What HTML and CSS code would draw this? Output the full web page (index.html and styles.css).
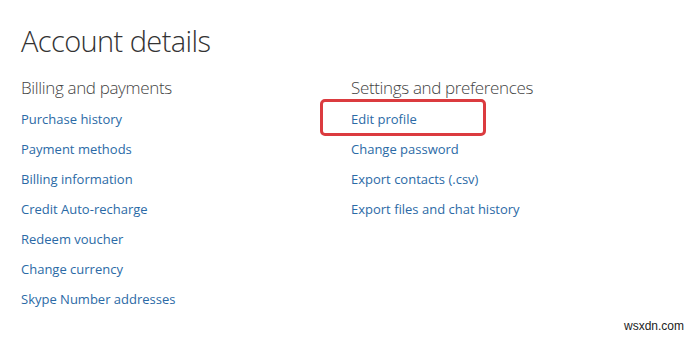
FILE: index.html
```html
<!DOCTYPE html>
<html lang="en">
<head>
  <meta charset="UTF-8" />
  <title>Account details</title>
  <link rel="stylesheet" href="styles.css">
</head>
<body>
  <div class="page">
    <h1 class="title">Account details</h1>

    <div class="columns">
      <div class="section">
        <h2>Billing and payments</h2>
        <ul class="links">
          <li><a href="#">Purchase history</a></li>
          <li><a href="#">Payment methods</a></li>
          <li><a href="#">Billing information</a></li>
          <li><a href="#">Credit Auto-recharge</a></li>
          <li><a href="#">Redeem voucher</a></li>
          <li><a href="#">Change currency</a></li>
          <li><a href="#">Skype Number addresses</a></li>
        </ul>
      </div>

      <div class="section">
        <h2>Settings and preferences</h2>
        <ul class="links">
          <li class="marked"><a href="#">Edit profile</a></li>
          <li><a href="#">Change password</a></li>
          <li><a href="#">Export contacts (.csv)</a></li>
          <li><a href="#">Export files and chat history</a></li>
        </ul>
      </div>
    </div>
  </div>

  <div class="watermark">wsxdn.com</div>
</body>
</html>
```

FILE: styles.css
```css
body {
  margin: 0;
  background: #fff;
  font-family: 'Open Sans', 'Noto Sans', sans-serif;
  width: 696px;
  height: 337px;
  position: relative;
  overflow: hidden;
}

.page {
  padding: 21px 0 0 21px;
}

.title {
  margin: 0;
  font-size: 29px;
  font-weight: 300;
  color: #333;
  line-height: 40px;
  letter-spacing: -0.6px;
}

.columns {
  display: grid;
  grid-template-columns: 330px 1fr;
  margin-top: 14px;
}

.section h2 {
  margin: 0;
  font-size: 17px;
  font-weight: 300;
  color: #444;
  line-height: 26px;
  letter-spacing: -0.35px;
}

.links {
  list-style: none;
  margin: 2px 0 0;
  padding: 0;
}

.links li {
  height: 30px;
  line-height: 30px;
}

.links a {
  font-size: 13px;
  color: #2b6aa6;
  text-decoration: none;
}

.marked {
  position: relative;
}

.marked::before {
  content: "";
  position: absolute;
  left: -31px;
  top: -4px;
  width: 160px;
  height: 31px;
  border: 3px solid #db3b3f;
  border-radius: 5px;
}

.watermark {
  position: absolute;
  right: 12px;
  bottom: 4px;
  font-family: 'Liberation Sans', sans-serif;
  font-size: 12px;
  color: #222;
}
```
